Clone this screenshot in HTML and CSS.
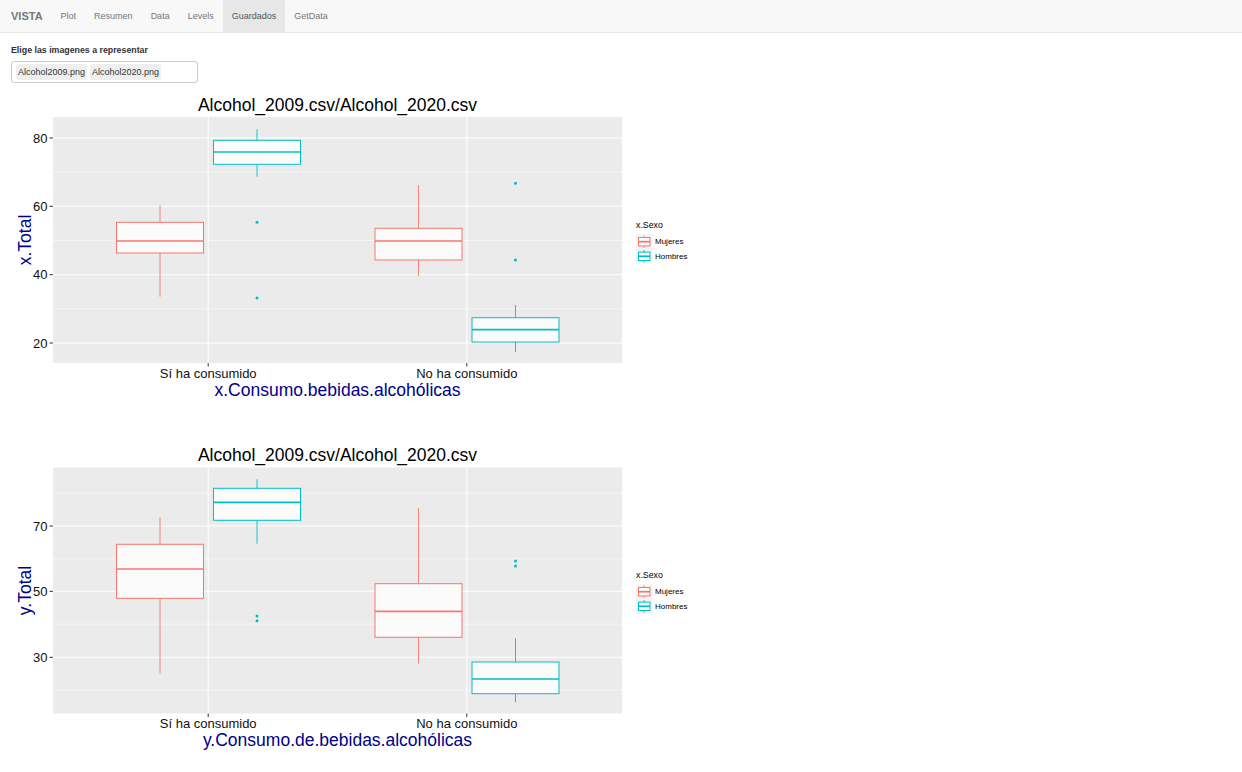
FILE: index.html
```html
<!DOCTYPE html>
<html lang="es">
<head>
<meta charset="utf-8">
<title>VISTA</title>
<link rel="stylesheet" href="styles.css">
</head>
<body>
<nav class="navbar">
  <span class="brand">VISTA</span>
  <span class="nav-item">Plot</span>
  <span class="nav-item">Resumen</span>
  <span class="nav-item">Data</span>
  <span class="nav-item">Levels</span>
  <span class="nav-item active">Guardados</span>
  <span class="nav-item">GetData</span>
</nav>
<div class="controls">
  <div class="label">Elige las imagenes a representar</div>
  <div class="select">
    <span class="chip">Alcohol2009.png</span>
    <span class="chip">Alcohol2020.png</span>
  </div>
</div>
<div class="plots">
  <svg class="plot" width="700" height="350" viewBox="0 0 700 350">
    <text class="title" x="337.5" y="19">Alcohol_2009.csv/Alcohol_2020.csv</text>
    <rect class="panel" x="53" y="25" width="569" height="246"/>
    <line class="gmin" x1="53" x2="622" y1="80.2" y2="80.2"/>
    <line class="gmin" x1="53" x2="622" y1="148.5" y2="148.5"/>
    <line class="gmin" x1="53" x2="622" y1="216.8" y2="216.8"/>
    <line class="gmaj" x1="53" x2="622" y1="46" y2="46"/>
    <line class="gmaj" x1="53" x2="622" y1="114.3" y2="114.3"/>
    <line class="gmaj" x1="53" x2="622" y1="182.7" y2="182.7"/>
    <line class="gmaj" x1="53" x2="622" y1="251" y2="251"/>
    <line class="gmaj" x1="208.2" x2="208.2" y1="25" y2="271"/>
    <line class="gmaj" x1="466.8" x2="466.8" y1="25" y2="271"/>

    <g class="m">
      <line class="wh" x1="160" x2="160" y1="113" y2="130.3"/>
      <line class="wh" x1="160" x2="160" y1="161" y2="204.7"/>
      <rect class="bx" x="116.5" y="130.3" width="87" height="30.7"/>
      <line class="md" x1="116.5" x2="203.5" y1="149" y2="149"/>
      <line class="wh" x1="418.5" x2="418.5" y1="93" y2="136.3"/>
      <line class="wh" x1="418.5" x2="418.5" y1="168" y2="184"/>
      <rect class="bx" x="375" y="136.3" width="87" height="31.7"/>
      <line class="md" x1="375" x2="462" y1="149" y2="149"/>
    </g>
    <g class="h">
      <line class="wh" x1="257" x2="257" y1="37.3" y2="48.3"/>
      <line class="wh" x1="257" x2="257" y1="72.3" y2="84.7"/>
      <rect class="bx" x="213.5" y="48.3" width="87" height="24"/>
      <line class="md" x1="213.5" x2="300.5" y1="60" y2="60"/>
      <circle class="pt" cx="257" cy="130.3" r="1.5"/>
      <circle class="pt" cx="257" cy="206" r="1.5"/>
      <line class="wh" x1="515.5" x2="515.5" y1="213" y2="225.7"/>
      <line class="wh" x1="515.5" x2="515.5" y1="250" y2="260"/>
      <rect class="bx" x="472" y="225.7" width="87" height="24.3"/>
      <line class="md" x1="472" x2="559" y1="237.7" y2="237.7"/>
      <circle class="pt" cx="515.5" cy="91.3" r="1.5"/>
      <circle class="pt" cx="515.5" cy="168" r="1.5"/>
    </g>

    <line class="tick" x1="49.5" x2="53" y1="46" y2="46"/>
    <line class="tick" x1="49.5" x2="53" y1="114.3" y2="114.3"/>
    <line class="tick" x1="49.5" x2="53" y1="182.7" y2="182.7"/>
    <line class="tick" x1="49.5" x2="53" y1="251" y2="251"/>
    <line class="tick" x1="208.2" x2="208.2" y1="271" y2="274.5"/>
    <line class="tick" x1="466.8" x2="466.8" y1="271" y2="274.5"/>
    <text class="ylab" x="47.5" y="50.6">80</text>
    <text class="ylab" x="47.5" y="118.9">60</text>
    <text class="ylab" x="47.5" y="187.3">40</text>
    <text class="ylab" x="47.5" y="255.6">20</text>
    <text class="xlab" x="208.2" y="286">Sí ha consumido</text>
    <text class="xlab" x="466.8" y="286">No ha consumido</text>
    <text class="axtitle" x="337.5" y="304">x.Consumo.bebidas.alcohólicas</text>
    <text class="axtitle" transform="translate(31 148) rotate(-90)">x.Total</text>

    <g class="legend">
      <text class="legtitle" x="636" y="136.3">x.Sexo</text>
      <rect class="keybg" x="636" y="142.3" width="16.5" height="29.4"/>
      <g class="m">
        <line class="wh" x1="644.2" x2="644.2" y1="143.5" y2="155.9"/>
        <rect class="bx" x="638.5" y="145.5" width="11.5" height="8.4"/>
        <line class="md" x1="638.5" x2="650" y1="149.7" y2="149.7"/>
      </g>
      <g class="h">
        <line class="wh" x1="644.2" x2="644.2" y1="158.1" y2="170.5"/>
        <rect class="bx" x="638.5" y="160.1" width="11.5" height="8.4"/>
        <line class="md" x1="638.5" x2="650" y1="164.3" y2="164.3"/>
      </g>
      <text class="leglab" x="655" y="152.3">Mujeres</text>
      <text class="leglab" x="655" y="167.4">Hombres</text>
    </g>
  </svg>

  <svg class="plot" width="700" height="350" viewBox="0 0 700 350">
    <text class="title" x="337.5" y="19">Alcohol_2009.csv/Alcohol_2020.csv</text>
    <rect class="panel" x="53" y="25.5" width="569" height="246"/>
    <line class="gmin" x1="53" x2="622" y1="51.2" y2="51.2"/>
    <line class="gmin" x1="53" x2="622" y1="116.8" y2="116.8"/>
    <line class="gmin" x1="53" x2="622" y1="182.1" y2="182.1"/>
    <line class="gmin" x1="53" x2="622" y1="247.8" y2="247.8"/>
    <line class="gmaj" x1="53" x2="622" y1="84" y2="84"/>
    <line class="gmaj" x1="53" x2="622" y1="149.3" y2="149.3"/>
    <line class="gmaj" x1="53" x2="622" y1="215.3" y2="215.3"/>
    <line class="gmaj" x1="208.2" x2="208.2" y1="25.5" y2="271.5"/>
    <line class="gmaj" x1="466.8" x2="466.8" y1="25.5" y2="271.5"/>

    <g class="m">
      <line class="wh" x1="160" x2="160" y1="75" y2="102.3"/>
      <line class="wh" x1="160" x2="160" y1="156.3" y2="231.7"/>
      <rect class="bx" x="116.5" y="102.3" width="87" height="54"/>
      <line class="md" x1="116.5" x2="203.5" y1="127" y2="127"/>
      <line class="wh" x1="418.5" x2="418.5" y1="66" y2="141.7"/>
      <line class="wh" x1="418.5" x2="418.5" y1="195.3" y2="221.7"/>
      <rect class="bx" x="375" y="141.7" width="87" height="53.6"/>
      <line class="md" x1="375" x2="462" y1="169.3" y2="169.3"/>
    </g>
    <g class="h">
      <line class="wh" x1="257" x2="257" y1="37.3" y2="46.3"/>
      <line class="wh" x1="257" x2="257" y1="78.3" y2="101.7"/>
      <rect class="bx" x="213.5" y="46.3" width="87" height="32"/>
      <line class="md" x1="213.5" x2="300.5" y1="60.3" y2="60.3"/>
      <circle class="pt" cx="257" cy="174" r="1.5"/>
      <circle class="pt" cx="257" cy="178.7" r="1.5"/>
      <line class="wh" x1="515.5" x2="515.5" y1="196.3" y2="220"/>
      <line class="wh" x1="515.5" x2="515.5" y1="251.7" y2="260.3"/>
      <rect class="bx" x="472" y="220" width="87" height="31.7"/>
      <line class="md" x1="472" x2="559" y1="237" y2="237"/>
      <circle class="pt" cx="515.5" cy="119" r="1.5"/>
      <circle class="pt" cx="515.5" cy="124" r="1.5"/>
    </g>

    <line class="tick" x1="49.5" x2="53" y1="84" y2="84"/>
    <line class="tick" x1="49.5" x2="53" y1="149.3" y2="149.3"/>
    <line class="tick" x1="49.5" x2="53" y1="215.3" y2="215.3"/>
    <line class="tick" x1="208.2" x2="208.2" y1="271.5" y2="275"/>
    <line class="tick" x1="466.8" x2="466.8" y1="271.5" y2="275"/>
    <text class="ylab" x="47.5" y="88.6">70</text>
    <text class="ylab" x="47.5" y="153.9">50</text>
    <text class="ylab" x="47.5" y="219.9">30</text>
    <text class="xlab" x="208.2" y="286.3">Sí ha consumido</text>
    <text class="xlab" x="466.8" y="286.3">No ha consumido</text>
    <text class="axtitle" x="337.5" y="303.7">y.Consumo.de.bebidas.alcohólicas</text>
    <text class="axtitle" transform="translate(31 148.5) rotate(-90)">y.Total</text>

    <g class="legend">
      <text class="legtitle" x="636" y="136.3">x.Sexo</text>
      <rect class="keybg" x="636" y="142.3" width="16.5" height="29.4"/>
      <g class="m">
        <line class="wh" x1="644.2" x2="644.2" y1="143.5" y2="155.9"/>
        <rect class="bx" x="638.5" y="145.5" width="11.5" height="8.4"/>
        <line class="md" x1="638.5" x2="650" y1="149.7" y2="149.7"/>
      </g>
      <g class="h">
        <line class="wh" x1="644.2" x2="644.2" y1="158.1" y2="170.5"/>
        <rect class="bx" x="638.5" y="160.1" width="11.5" height="8.4"/>
        <line class="md" x1="638.5" x2="650" y1="164.3" y2="164.3"/>
      </g>
      <text class="leglab" x="655" y="152.3">Mujeres</text>
      <text class="leglab" x="655" y="167.4">Hombres</text>
    </g>
  </svg>
</div>
</body>
</html>
```
FILE: styles.css
```css
html, body {
  margin: 0;
  padding: 0;
  background: #ffffff;
  font-family: "Liberation Sans", Arial, sans-serif;
  color: #333333;
}

.navbar {
  display: flex;
  height: 32px;
  background: #f8f8f8;
  border-bottom: 1px solid #e7e7e7;
  font-size: 9px;
  color: #777777;
}

.brand {
  padding: 0 9px 0 11px;
  font-size: 11px;
  font-weight: bold;
  line-height: 32px;
  color: #777777;
}

.nav-item {
  padding: 0 9px;
  line-height: 32px;
}

.nav-item.active {
  background: #e7e7e7;
  color: #555555;
}

.controls {
  padding: 0 11px;
}

.label {
  margin-top: 11px;
  margin-bottom: 4px;
  font-size: 8.8px;
  font-weight: bold;
  line-height: 13px;
  color: #333333;
}

.select {
  box-sizing: border-box;
  display: flex;
  gap: 3px;
  width: 187px;
  height: 22px;
  padding: 2px 4px;
  border: 1px solid #cccccc;
  border-radius: 3px;
  background: #ffffff;
}

.chip {
  padding: 0 2px;
  height: 16px;
  line-height: 16px;
  font-size: 9px;
  color: #333333;
  background: #efefef;
  border-radius: 2px;
}

.plots {
  margin-top: 9px;
}

.plot {
  display: block;
  font-family: "Liberation Sans", Arial, sans-serif;
}

.panel {
  fill: #ebebeb;
}

.gmaj {
  stroke: #ffffff;
  stroke-width: 1.1;
}

.gmin {
  stroke: #ffffff;
  stroke-width: 0.55;
}

.m { stroke: #f8766d; }
.h { stroke: #00bfc4; }
.m .pt { fill: #f8766d; stroke: none; }
.h .pt { fill: #00bfc4; stroke: none; }

.bx {
  fill: #fbfbfb;
  stroke-width: 1;
}

.md {
  stroke-width: 1.7;
}

.wh {
  stroke-width: 0.9;
}

.tick {
  stroke: #333333;
  stroke-width: 1;
}

.title {
  font-size: 17.5px;
  fill: #000000;
  text-anchor: middle;
}

.ylab {
  font-size: 13px;
  fill: #111111;
  text-anchor: end;
}

.xlab {
  font-size: 13px;
  fill: #111111;
  text-anchor: middle;
}

.axtitle {
  font-size: 17.5px;
  fill: #00008b;
  text-anchor: middle;
}

.legtitle {
  font-size: 8.8px;
  fill: #000000;
}

.keybg {
  fill: #f2f2f2;
}

.leglab {
  font-size: 8px;
  fill: #000000;
}
```
